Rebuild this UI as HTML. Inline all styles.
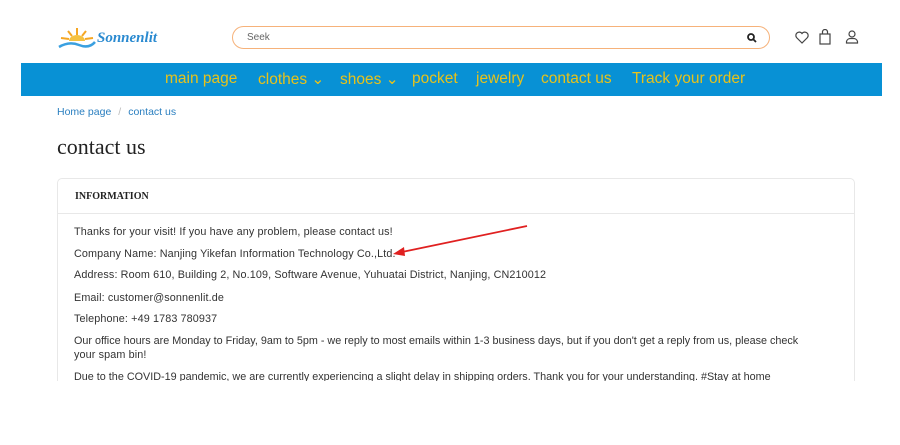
<!DOCTYPE html>
<html><head><style>
body{margin:0;width:900px;height:445px;background:#fff;font-family:"Liberation Sans",sans-serif;position:relative;overflow:hidden}
.clip{position:absolute;left:0;top:0;width:900px;height:381px;overflow:hidden}
.logo{position:absolute;left:57px;top:26px}
.logo span{position:absolute;left:40px;top:4px;font-family:"Liberation Serif",serif;font-style:italic;font-weight:bold;color:#2a8ad0;font-size:15px;white-space:nowrap}
.search{position:absolute;left:232px;top:26px;width:538px;height:23px;border:1.5px solid #f6b27a;border-radius:12px;box-sizing:border-box}
.search span{position:absolute;left:14px;top:5px;font-size:10px;color:#666}
.nav{position:absolute;left:21px;top:63px;width:861px;height:33px;background:#0891d5}
.nav div{position:absolute;top:7px;font-size:15.5px;color:#e8c21a;white-space:nowrap}
.bc{position:absolute;left:57px;top:106px;font-size:10.5px;color:#2a7fc0}
.bc i{color:#bbb;font-style:normal;margin:0 7px}
h1{position:absolute;left:57px;top:134px;margin:0;font-family:"Liberation Serif",serif;font-weight:normal;font-size:22px;color:#222}
.card{position:absolute;left:57px;top:178px;width:798px;height:260px;border:1px solid #e8e8e8;border-radius:5px;box-sizing:border-box}
.card .hd{height:35px;border-bottom:1px solid #e8e8e8;font-family:"Liberation Serif",serif;font-weight:bold;font-size:10px;padding:12px 0 0 17px;box-sizing:border-box;color:#222}
.p{position:absolute;left:74px;font-size:10.8px;letter-spacing:0.12px;color:#333;white-space:nowrap}
</style></head><body>
<div class="clip">
<div class="logo"><svg width="40" height="24" viewBox="0 0 40 24"><g stroke="#f5a623" stroke-width="2"><line x1="20" y1="2" x2="20" y2="9"/><line x1="11" y1="5" x2="15" y2="10"/><line x1="29" y1="5" x2="25" y2="10"/><line x1="4" y1="12" x2="12" y2="13"/><line x1="36" y1="12" x2="28" y2="13"/></g><path d="M12 15a8 6 0 0 1 16 0z" fill="#f5c242"/><path d="M2 21q10-6 20-2t16-3" stroke="#3aa0e0" stroke-width="2.5" fill="none"/></svg><span>Sonnenlit</span></div>
<div class="search"><span>Seek</span><svg style="position:absolute;right:12px;top:6px" width="10" height="10" viewBox="0 0 10 10"><circle cx="4" cy="4" r="3" stroke="#222" stroke-width="1.8" fill="none"/><line x1="6" y1="6" x2="9" y2="9" stroke="#222" stroke-width="1.8"/></svg></div>
<svg style="position:absolute;left:795px;top:31px" width="14" height="13" viewBox="0 0 14 13"><path d="M7 12L1.5 6.5A3 3 0 0 1 7 2.5A3 3 0 0 1 12.5 6.5Z" fill="none" stroke="#444" stroke-width="1.2"/></svg>
<svg style="position:absolute;left:818px;top:29px" width="14" height="16" viewBox="0 0 14 16"><rect x="2" y="5" width="10" height="10" fill="none" stroke="#444" stroke-width="1.2"/><path d="M4.5 5V3a2.5 2.5 0 0 1 5 0v2" fill="none" stroke="#444" stroke-width="1.2"/></svg>
<svg style="position:absolute;left:845px;top:29px" width="14" height="15" viewBox="0 0 14 15"><circle cx="7" cy="5" r="3" fill="none" stroke="#444" stroke-width="1.2"/><path d="M1.5 14v-1.5a4 4 0 0 1 4-3h3a4 4 0 0 1 4 3V14z" fill="none" stroke="#444" stroke-width="1.2"/></svg>
<div class="nav">
<div style="left:144px">main page</div>
<div style="left:237px">clothes ⌄</div>
<div style="left:319px">shoes ⌄</div>
<div style="left:391px">pocket</div>
<div style="left:455px">jewelry</div>
<div style="left:520px">contact us</div>
<div style="left:611px">Track your order</div>
</div>
<div class="bc">Home page<i>/</i>contact us</div>
<h1>contact us</h1>
<div class="card"><div class="hd">INFORMATION</div></div>
<div class="p" style="top:226px">Thanks for your visit! If you have any problem, please contact us!</div>
<div class="p" style="top:248px">Company Name: Nanjing Yikefan Information Technology Co.,Ltd.</div>
<div class="p" style="top:269px">Address: Room 610, Building 2, No.109, Software Avenue, Yuhuatai District, Nanjing, CN210012</div>
<div class="p" style="top:292px">Email: customer@sonnenlit.de</div>
<div class="p" style="top:313px">Telephone: +49 1783 780937</div>
<div class="p" style="top:335px;letter-spacing:0px">Our office hours are Monday to Friday, 9am to 5pm - we reply to most emails within 1-3 business days, but if you don't get a reply from us, please check</div>
<div class="p" style="top:349px">your spam bin!</div>
<div class="p" style="top:371px;letter-spacing:0px">Due to the COVID-19 pandemic, we are currently experiencing a slight delay in shipping orders. Thank you for your understanding. #Stay at home</div>
<svg style="position:absolute;left:390px;top:224px" width="140" height="34" viewBox="0 0 140 34"><line x1="137" y1="2" x2="12" y2="28" stroke="#e02020" stroke-width="1.8"/><path d="M3 30L14 23L15 32Z" fill="#e02020"/></svg>
</div>
</body></html>
